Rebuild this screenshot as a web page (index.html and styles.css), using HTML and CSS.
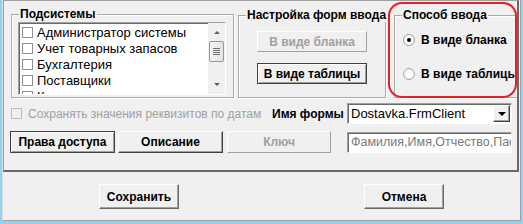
FILE: index.html
```html
<!DOCTYPE html>
<html lang="ru">
<head>
    <meta charset="UTF-8">
    <title>Настройка подсистем</title>
    <link rel="stylesheet" href="styles.css">
</head>
<body>
    <div class="frame">
        <div class="window">
            <div class="panel">
                <div class="top-row">
                    <fieldset class="group subsystems">
                        <legend>Подсистемы</legend>
                        <div class="listbox">
                            <ul class="items">
                                <li><span class="check"></span>Администратор системы</li>
                                <li><span class="check"></span>Учет товарных запасов</li>
                                <li><span class="check"></span>Бухгалтерия</li>
                                <li><span class="check"></span>Поставщики</li>
                                <li><span class="check"></span>Клиенты</li>
                            </ul>
                            <div class="scrollbar">
                                <span class="arrow up"></span>
                                <span class="thumb"><i></i><i></i><i></i><i></i></span>
                                <span class="arrow down"></span>
                            </div>
                        </div>
                    </fieldset>
                    <fieldset class="group forms">
                        <legend>Настройка форм ввода</legend>
                        <button class="btn" disabled>В виде бланка</button>
                        <button class="btn btn-default">В виде таблицы</button>
                    </fieldset>
                    <fieldset class="group mode">
                        <legend>Способ ввода</legend>
                        <div class="radio"><span class="dot checked"></span>В виде бланка</div>
                        <div class="radio second"><span class="dot"></span>В виде таблицы</div>
                    </fieldset>
                </div>
                <div class="highlight"></div>

                <div class="form-row">
                    <div class="keep disabled"><span class="check"></span>Сохранять значения реквизитов по датам</div>
                    <span class="caption">Имя формы</span>
                    <div class="combo">
                        <span class="combo-text">Dostavka.FrmClient</span>
                        <span class="combo-btn"><span class="tri"></span></span>
                    </div>
                </div>

                <div class="action-row">
                    <button class="btn btn-default wide">Права доступа</button>
                    <button class="btn wide">Описание</button>
                    <button class="btn key" disabled>Ключ</button>
                    <div class="field">Фамилия,Имя,Отчество,Паспорт</div>
                </div>
            </div>

            <div class="footer">
                <button class="btn big">Сохранить</button>
                <button class="btn big cancel">Отмена</button>
            </div>
        </div>
    </div>
</body>
</html>
```

FILE: styles.css
```css
* {
    margin: 0;
    padding: 0;
    box-sizing: border-box;
}

body {
    width: 523px;
    height: 224px;
    overflow: hidden;
    background-color: #f0f0f0;
    font-family: "Liberation Sans", Arial, sans-serif;
    font-size: 13px;
    color: #000;
}

.frame {
    width: 523px;
    height: 224px;
    border-left: 2px solid #8fd3f0;
    border-right: 2px solid #8fd3f0;
    border-bottom: 3px solid #8fd3f0;
}

.window {
    height: 100%;
    display: flex;
    flex-direction: column;
    border-left: 1px solid #dcdcdc;
    border-right: 1px solid #a0a0a0;
    border-bottom: 1px solid #a0a0a0;
}

/* upper panel */
.panel {
    position: relative;
    height: 172px;
    margin-right: 1px;
    overflow: hidden;
    border-top: 1px solid #a0a0a0;
    border-left: 1px solid #a0a0a0;
    border-right: 2px solid #696969;
    border-bottom: 2px solid #696969;
}

.top-row {
    display: flex;
    align-items: flex-start;
    padding-left: 7px;
    margin-top: 6px;
}

.group {
    min-width: 0;
    border: 1px solid #a9a9a9;
    box-shadow: inset 1px 1px 0 #fff, 1px 1px 0 #fff;
    padding: 0 0 0 6px;
    flex-shrink: 0;
}

.group legend {
    font-size: 12px;
    font-weight: bold;
    line-height: 14px;
    padding: 0 1px;
    margin-left: 1px;
    white-space: nowrap;
}

.subsystems {
    width: 223px;
    height: 91px;
}

.forms {
    width: 148px;
    height: 90px;
    margin-top: 1px;
    margin-left: 4px;
    display: flex;
    flex-direction: column;
    align-items: flex-start;
}

.mode {
    width: 150px;
    height: 90px;
    margin-top: 1px;
    margin-left: 8px;
}

/* list with checkboxes */
.listbox {
    display: flex;
    width: 208px;
    height: 73px;
    margin-top: 1px;
    background-color: #fff;
    border: 1px solid;
    border-color: #a0a0a0 #fff #fff #a0a0a0;
    box-shadow: inset 1px 1px 0 #696969;
    overflow: hidden;
}

.items {
    list-style: none;
    flex: 1;
    padding: 1px 0 0 3px;
}

.items li {
    display: flex;
    align-items: center;
    height: 16px;
    white-space: nowrap;
}

.check {
    display: inline-block;
    width: 11px;
    height: 11px;
    margin-right: 4px;
    border: 1px solid #8e8f8f;
    background-color: #fff;
    flex-shrink: 0;
}

.scrollbar {
    width: 17px;
    background-color: #f0f0f0;
    display: flex;
    flex-direction: column;
    align-items: center;
}

.arrow {
    width: 0;
    height: 0;
    border-left: 3px solid transparent;
    border-right: 3px solid transparent;
}

.arrow.up {
    margin-top: 8px;
    border-bottom: 3px solid #606060;
}

.arrow.down {
    margin-top: auto;
    margin-bottom: 8px;
    border-top: 3px solid #606060;
}

.thumb {
    width: 15px;
    height: 21px;
    margin-top: 7px;
    border: 1px solid #979797;
    border-radius: 2px;
    background: linear-gradient(to right, #f4f4f4, #e4e4e4);
    display: flex;
    flex-direction: column;
    align-items: center;
    justify-content: center;
    gap: 1px;
}

.thumb i {
    display: block;
    width: 7px;
    height: 1px;
    background-color: #6f6f6f;
}

/* buttons */
.btn {
    font-family: inherit;
    font-size: 12px;
    font-weight: bold;
    color: #000;
    background-color: #f0f0f0;
    border: 1px solid;
    border-color: #fff #404040 #404040 #fff;
    box-shadow: inset -1px -1px 0 #a0a0a0;
    white-space: nowrap;
}

.btn-default {
    border-color: #404040;
    box-shadow: inset 1px 1px 0 #fff, inset -1px -1px 0 #a0a0a0;
}

.btn:disabled {
    color: #a0a0a0;
    border-color: #fff #a0a0a0 #a0a0a0 #fff;
    box-shadow: none;
}

.forms .btn {
    width: 110px;
    height: 21px;
    margin-left: 12px;
    margin-top: 9px;
}

.forms .btn + .btn {
    margin-top: 11px;
}

/* radio buttons */
.radio {
    display: flex;
    align-items: center;
    height: 16px;
    margin-top: 10px;
    margin-left: 2px;
    font-size: 12px;
    font-weight: bold;
    white-space: nowrap;
}

.radio.second {
    margin-top: 18px;
}

.dot {
    width: 12px;
    height: 12px;
    margin-right: 6px;
    border-radius: 50%;
    border: 1px solid #a6a6a6;
    background: radial-gradient(circle, #fff 40%, #e6e6e6 100%);
    display: flex;
    align-items: center;
    justify-content: center;
    flex-shrink: 0;
}

.dot.checked::after {
    content: "";
    width: 4px;
    height: 4px;
    border-radius: 50%;
    background-color: #000;
}

.highlight {
    position: absolute;
    left: 384px;
    top: 1px;
    width: 129px;
    height: 96px;
    border: 2px solid #e3202c;
    border-radius: 14px;
}

/* form name row */
.form-row {
    display: flex;
    align-items: center;
    height: 21px;
    margin-top: 5px;
    padding-left: 7px;
}

.keep {
    display: flex;
    align-items: center;
    width: 261px;
    font-size: 12px;
    white-space: nowrap;
    overflow: hidden;
}

.keep .check {
    margin-right: 6px;
    border-color: #bcbcbc;
    background-color: #f0f0f0;
}

.disabled {
    color: #a0a0a0;
}

.caption {
    font-size: 12px;
    font-weight: bold;
    width: 75px;
    white-space: nowrap;
}

.combo {
    display: flex;
    align-items: center;
    width: 165px;
    height: 21px;
    background-color: #fff;
    border: 1px solid;
    border-color: #a0a0a0 #fff #fff #a0a0a0;
    box-shadow: inset 1px 1px 0 #696969;
    padding: 0 1px 0 3px;
}

.combo-text {
    flex: 1;
}

.combo-btn {
    width: 17px;
    height: 17px;
    background-color: #f0f0f0;
    border: 1px solid;
    border-color: #fff #404040 #404040 #fff;
    box-shadow: inset -1px -1px 0 #a0a0a0;
    display: flex;
    align-items: center;
    justify-content: center;
}

.tri {
    width: 0;
    height: 0;
    border-left: 4px solid transparent;
    border-right: 4px solid transparent;
    border-top: 4px solid #000;
}

/* buttons row */
.action-row {
    display: flex;
    align-items: center;
    height: 22px;
    margin-top: 7px;
    padding-left: 6px;
}

.action-row .btn {
    height: 22px;
}

.wide {
    width: 105px;
    margin-right: 3px;
}

.key {
    width: 104px;
    margin-left: 1px;
}

.field {
    width: 165px;
    height: 21px;
    margin-left: 16px;
    padding-left: 3px;
    line-height: 19px;
    font-size: 12.5px;
    color: #7a7a7a;
    background-color: #fff;
    border: 1px solid;
    border-color: #a0a0a0 #fff #fff #a0a0a0;
    box-shadow: inset 1px 1px 0 #696969;
    white-space: nowrap;
    overflow: hidden;
}

/* bottom buttons */
.footer {
    flex: 1;
    display: flex;
    align-items: flex-start;
    padding: 12px 0 0 96px;
}

.big {
    width: 80px;
    height: 25px;
    border-color: #fff #696969 #696969 #fff;
    box-shadow: inset -1px -1px 0 #a0a0a0;
}

.cancel {
    margin-left: 185px;
}
```
